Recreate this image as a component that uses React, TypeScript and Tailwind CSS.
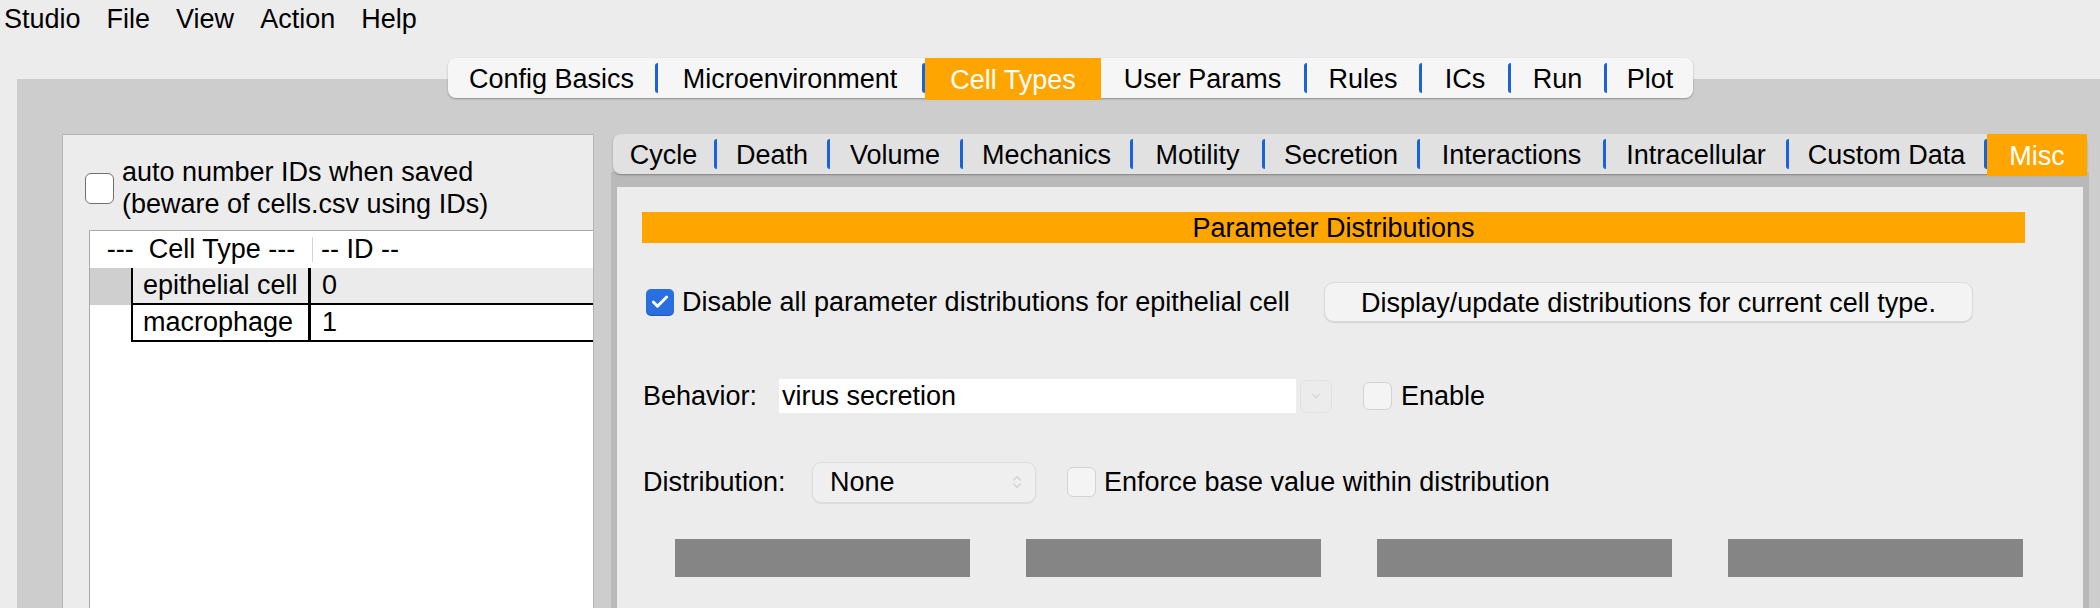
import { Check, ChevronDown, ChevronsUpDown } from "lucide-react";

type Tab = { label: string; w: string; active?: boolean };

const topTabs: Tab[] = [
  { label: "Config Basics", w: "w-[207px]" },
  { label: "Microenvironment", w: "w-[264px]" },
  { label: "Cell Types", w: "w-[176px]", active: true },
  { label: "User Params", w: "w-[203px]" },
  { label: "Rules", w: "w-[112px]" },
  { label: "ICs", w: "w-[86px]" },
  { label: "Run", w: "w-[93px]" },
  { label: "Plot", w: "w-[86px]" },
];

const cellTabs: Tab[] = [
  { label: "Cycle", w: "w-[101px]" },
  { label: "Death", w: "w-[110px]" },
  { label: "Volume", w: "w-[130px]" },
  { label: "Mechanics", w: "w-[167px]" },
  { label: "Motility", w: "w-[129px]" },
  { label: "Secretion", w: "w-[152px]" },
  { label: "Interactions", w: "w-[183px]" },
  { label: "Intracellular", w: "w-[180px]" },
  { label: "Custom Data", w: "w-[195px]" },
  { label: "Misc", w: "w-[100px]", active: true },
];

const menus = ["Studio", "File", "View", "Action", "Help"];

function TabBar({ tabs, className }: { tabs: Tab[]; className: string }) {
  return (
    <div className={`flex h-[40px] rounded-[8px] shadow-[0_1px_2px_rgba(0,0,0,0.3)] ${className}`}>
      {tabs.map((t, i) => (
        <div key={t.label} className="flex">
          {i > 0 && !tabs[i - 1].active && (
            <span className="w-[3px] h-[30px] self-center rounded-l-full bg-[#1b62d6]" />
          )}
          <div
            className={`${t.w} flex items-center justify-center pt-[3px] ${
              t.active ? "bg-[#ffa500] text-white h-[42px]" : "h-[40px]"
            }`}
          >
            {t.label}
          </div>
        </div>
      ))}
    </div>
  );
}

function EmptyBox({ className }: { className: string }) {
  return <span className={`rounded-[6px] border ${className}`} />;
}

function CellTable() {
  const rows = [
    { name: "epithelial cell", id: "0", selected: true },
    { name: "macrophage", id: "1", selected: false },
  ];
  return (
    <div className="ml-[26px] mt-[10px] flex-1 bg-white border-l border-t border-[#a9a9a9]">
      <div className="flex h-[37px] items-center">
        <div className="w-[222px] text-center whitespace-pre">---  Cell Type ---</div>
        <span className="w-px h-[25px] bg-[#d4d4d4]" />
        <div className="pl-[8px]">-- ID --</div>
      </div>
      {rows.map((r) => (
        <div key={r.name} className={`flex h-[37px] ${r.selected ? "bg-[#ebebeb]" : ""}`}>
          <div className={`w-[41px] ${r.selected ? "bg-[#cfcfcf]" : ""}`} />
          <div className="flex flex-1 border-l-2 border-b-2 border-black">
            <div className="w-[178px] pl-[10px] flex items-center border-r-[3px] border-black">
              {r.name}
            </div>
            <div className="pl-[11px] flex items-center">{r.id}</div>
          </div>
        </div>
      ))}
    </div>
  );
}

function MiscPane() {
  return (
    <div className="h-[460px] bg-[#ececec] flex flex-col">
      <div className="ml-[25px] mt-[25px] w-[1383px] h-[31px] bg-[#ffa500] flex items-center justify-center pt-[2px]">
        Parameter Distributions
      </div>

      <div className="ml-[29px] mt-[39px] h-[40px] flex items-center">
        <span className="w-[28px] h-[27px] rounded-[5px] bg-[#2a6fe0] flex items-center justify-center shadow-[inset_0_-1px_1px_rgba(0,0,0,0.2)]">
          <Check className="w-[20px] h-[20px] text-white" strokeWidth={3.5} />
        </span>
        <span className="ml-[8px] w-[620px]">Disable all parameter distributions for epithelial cell</span>
        <button className="ml-[22px] w-[649px] h-[40px] rounded-[10px] bg-[#f3f3f3] border border-[#dadada] shadow-[0_1px_1px_rgba(0,0,0,0.12)]">
          Display/update distributions for current cell type.
        </button>
      </div>

      <div className="ml-[26px] mt-[54px] h-[40px] flex items-center">
        <span className="w-[136px]">Behavior:</span>
        <div className="w-[517px] h-[34px] bg-white pl-[3px] flex items-center">virus secretion</div>
        <span className="ml-[4px] w-[32px] h-[33px] rounded-[7px] border border-[#e0e0e0] bg-[#ececec] flex items-center justify-center">
          <ChevronDown className="w-[14px] h-[14px] text-[#d4d4d4]" />
        </span>
        <EmptyBox className="ml-[31px] w-[29px] h-[28px] bg-[#f4f4f4] border-[#d2d2d2]" />
        <span className="ml-[9px]">Enable</span>
      </div>

      <div className="ml-[26px] mt-[45px] h-[42px] flex items-center">
        <span className="w-[169px]">Distribution:</span>
        <div className="w-[224px] h-[41px] rounded-[9px] bg-[#efefef] border border-[#dcdcdc] shadow-[0_1px_1px_rgba(0,0,0,0.08)] pl-[17px] pr-[10px] flex items-center justify-between">
          <span>None</span>
          <ChevronsUpDown className="w-[16px] h-[22px] text-[#d2d2d2]" />
        </div>
        <EmptyBox className="ml-[31px] w-[29px] h-[30px] bg-[#f4f4f4] border-[#d2d2d2]" />
        <span className="ml-[8px]">Enforce base value within distribution</span>
      </div>

      <div className="ml-[58px] mt-[36px] flex gap-[56px]">
        {[0, 1, 2, 3].map((i) => (
          <div key={i} className="w-[295px] h-[38px] bg-[#858585]" />
        ))}
      </div>
    </div>
  );
}

export default function App() {
  return (
    <div className="w-[2100px] h-[608px] overflow-hidden bg-[#ececec] text-black text-[27px] font-['Liberation_Sans',Arial,sans-serif] flex flex-col">
      <div className="h-[38px] flex items-center gap-[26px] pl-[4px] shrink-0">
        {menus.map((m) => (
          <span key={m}>{m}</span>
        ))}
      </div>

      <div className="relative z-10 mt-[20px] pl-[448px] shrink-0 flex">
        <TabBar tabs={topTabs} className="bg-[#f6f6f6]" />
      </div>

      <div className="-mt-[19px] ml-[17px] w-[2083px] h-[560px] shrink-0 bg-[#cdcdcd] flex pt-[55px] pl-[45px] gap-[17px]">
        <div className="w-[532px] h-[500px] bg-[#ececec] border border-[#b3b3b3] flex flex-col">
          <div className="ml-[22px] mt-[21px] flex items-center">
            <EmptyBox className="w-[29px] h-[31px] bg-white border-[#707070]" />
            <div className="ml-[8px] leading-[32px]">
              auto number IDs when saved
              <br />
              (beware of cells.csv using IDs)
            </div>
          </div>
          <CellTable />
        </div>

        <div className="w-[1478px] flex flex-col">
          <div className="relative z-10 ml-[2px] flex">
            <TabBar tabs={cellTabs} className="bg-[#e1e1e1]" />
          </div>
          <div className="-mt-[2px] flex-1 bg-[#b9b9b9] pt-[15px] px-[6px]">
            <MiscPane />
          </div>
        </div>
      </div>
    </div>
  );
}
